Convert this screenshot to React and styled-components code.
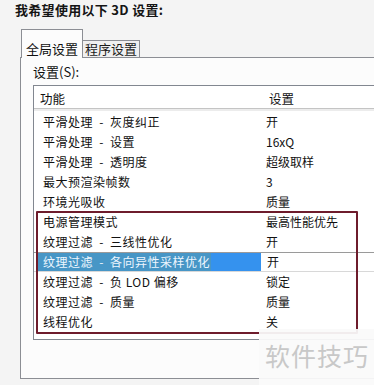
import React from 'react';
import styled, { createGlobalStyle } from 'styled-components';

const GlobalStyle = createGlobalStyle`
  html, body {
    margin: 0;
    padding: 0;
    background: #f4f4f4;
  }
  body {
    font-family: "Noto Sans CJK SC", "Liberation Sans", sans-serif;
    color: #111;
  }
`;

const rows = [
  { name: ['平滑处理', '灰度纠正'], value: '开' },
  { name: ['平滑处理', '设置'], value: '16xQ' },
  { name: ['平滑处理', '透明度'], value: '超级取样' },
  { name: ['最大预渲染帧数'], value: '3' },
  { name: ['环境光吸收'], value: '质量' },
  { name: ['电源管理模式'], value: '最高性能优先' },
  { name: ['纹理过滤', '三线性优化'], value: '开' },
  { name: ['纹理过滤', '各向异性采样优化'], value: '开', selected: true },
  { name: ['纹理过滤', '负 LOD 偏移'], value: '锁定' },
  { name: ['纹理过滤', '质量'], value: '质量' },
  { name: ['线程优化'], value: '关' },
];

function App() {
  return (
    <Page>
      <GlobalStyle />
      <Title>我希望使用以下 3D 设置:</Title>
      <Tabs>
        <Tab active>全局设置</Tab>
        <Tab>程序设置</Tab>
      </Tabs>
      <Panel>
        <Label>设置(S):</Label>
        <List>
          <Header>
            <HeadCell>功能</HeadCell>
            <HeadCell>设置</HeadCell>
          </Header>
          <Body>
            {rows.map((row, i) => (
              <Row key={i} selected={row.selected}>
                <NameCell selected={row.selected}>
                  <NameText selected={row.selected}>
                    {row.name.map((part, j) => (
                      <React.Fragment key={j}>
                        {j > 0 && <Sep>-</Sep>}
                        {part}
                      </React.Fragment>
                    ))}
                  </NameText>
                </NameCell>
                <ValueCell selected={row.selected}>{row.value}</ValueCell>
              </Row>
            ))}
          </Body>
        </List>
      </Panel>
      <Highlight />
      <Watermark>软件技巧</Watermark>
    </Page>
  );
}

export default App;

const Page = styled.div`
  position: relative;
  width: 374px;
  height: 385px;
  overflow: hidden;
  background: #f4f4f4;
`;

const Title = styled.div`
  height: 20px;
  line-height: 20px;
  padding-left: 15px;
  font-size: 13px;
  font-weight: bold;
  letter-spacing: 0.3px;
  color: #151515;
`;

const Tabs = styled.div`
  display: flex;
  align-items: flex-end;
  margin: 9px 0 0 21px;
  height: 29px;
`;

const Tab = styled.div`
  position: relative;
  z-index: 1;
  box-sizing: border-box;
  font-size: 13px;
  text-align: center;
  border: 1px solid #8c8e94;
  border-bottom: none;
  ${p => p.active ? `
    width: 62px;
    height: 29px;
    padding-top: 11px;
    line-height: 16px;
    background: #fcfcfc;
  ` : `
    width: 57px;
    height: 17px;
    margin-bottom: 1px;
    border-left: none;
    line-height: 16px;
    background: #f0f0f0;
    color: #1a1a1a;
  `}
`;

const Panel = styled.div`
  margin: -1px 0 0 20px;
  width: 380px;
  height: 322px;
  box-sizing: border-box;
  border: 1px solid #8c8e94;
  background: #fcfcfc;
  padding: 6px 0 0 12px;
`;

const Label = styled.div`
  font-size: 13px;
  line-height: 16px;
  height: 16px;
`;

const List = styled.div`
  margin-top: 5px;
  width: 360px;
  height: 255px;
  box-sizing: border-box;
  border: 1px solid #828790;
  background: #fff;
`;

const Header = styled.div`
  display: grid;
  grid-template-columns: 229px 1fr;
  height: 22px;
  border-bottom: 1px solid #c4c4c4;
  box-shadow: 0 2px 0 #ececec;
`;

const HeadCell = styled.div`
  font-size: 12.5px;
  line-height: 16px;
  padding: 5px 0 0 6px;
`;

const Body = styled.div`
  padding-top: 3px;
`;

const Row = styled.div`
  display: grid;
  grid-template-columns: 232px 1fr;
  height: 20px;
  box-sizing: border-box;
  font-size: 12px;
  line-height: 20px;
  ${p => p.selected && `
    border-top: 1px solid #9a9a9a;
    border-bottom: 1px solid #d8d8d8;
    line-height: 18px;
    grid-template-columns: 227px 1fr;
  `}
`;

const NameCell = styled.div`
  padding-left: 9px;
  overflow: hidden;
  white-space: nowrap;
  ${p => p.selected && `
    margin-left: 3px;
    padding-left: 0;
    background: #3592ee;
  `}
`;

const NameText = styled.span`
  display: inline-block;
  letter-spacing: 0.5px;
  ${p => p.selected && `
    padding: 0 1px 0 6px;
    background: #4796c6;
    color: #eef6ff;
  `}
`;

const Sep = styled.span`
  display: inline-block;
  width: 17px;
  text-align: center;
`;

const ValueCell = styled.div`
  padding-left: ${p => p.selected ? '6px' : '0'};
  white-space: nowrap;
`;

const Highlight = styled.div`
  position: absolute;
  left: 36px;
  top: 211px;
  width: 322px;
  height: 123px;
  box-sizing: border-box;
  border: 2px solid #6e1c2c;
  border-radius: 1px;
  pointer-events: none;
`;

const Watermark = styled.div`
  position: absolute;
  left: 259px;
  top: 329px;
  right: 0;
  bottom: 0;
  background: rgba(250, 250, 250, 0.94);
  color: #c8c8c8;
  font-size: 25px;
  line-height: 30px;
  padding: 11px 0 0 6px;
  letter-spacing: 1px;
  white-space: nowrap;
`;
